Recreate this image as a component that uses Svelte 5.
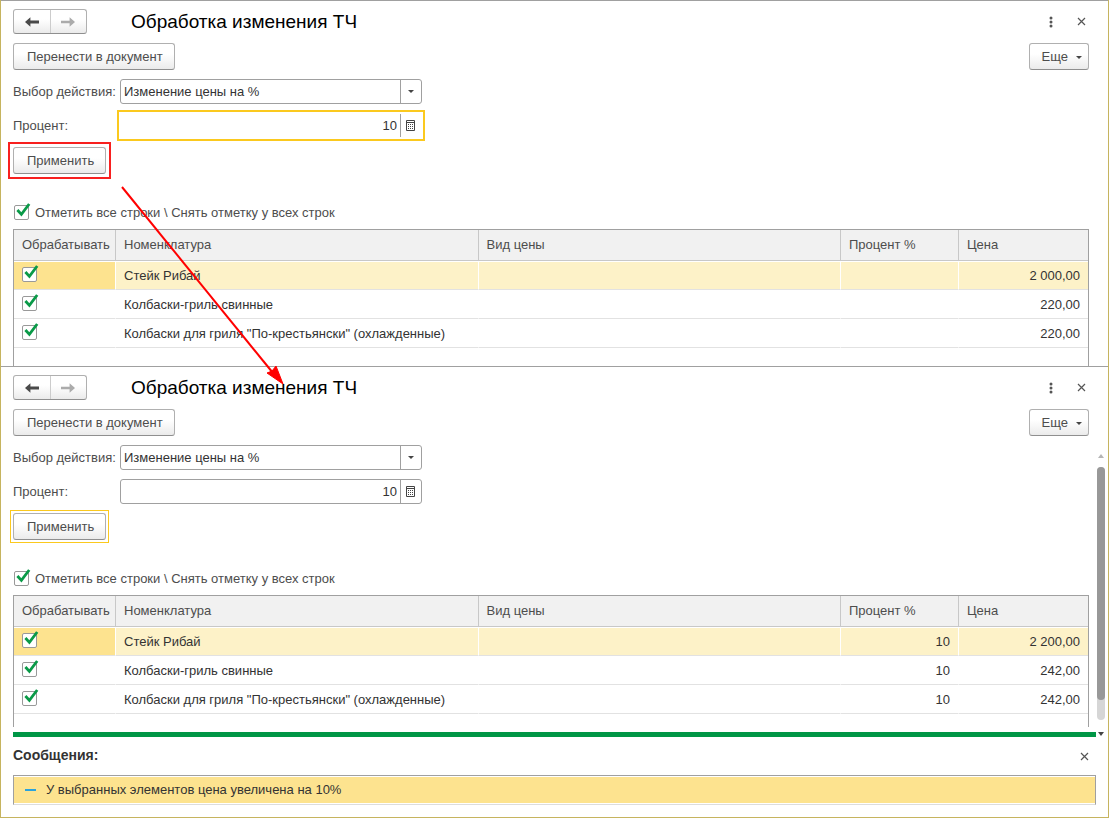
<script>
  const forms = [
    {
      id: 'before',
      focus: 'percent',
      mark: 'red',
      rows: [
        { name: 'Стейк Рибай', percent: '', price: '2 000,00' },
        { name: 'Колбаски-гриль свинные', percent: '', price: '220,00' },
        { name: 'Колбаски для гриля "По-крестьянски" (охлажденные)', percent: '', price: '220,00' }
      ]
    },
    {
      id: 'after',
      focus: 'apply',
      mark: 'yellow',
      messages: ['У выбранных элементов цена увеличена на 10%'],
      rows: [
        { name: 'Стейк Рибай', percent: '10', price: '2 200,00' },
        { name: 'Колбаски-гриль свинные', percent: '10', price: '242,00' },
        { name: 'Колбаски для гриля "По-крестьянски" (охлажденные)', percent: '10', price: '242,00' }
      ]
    }
  ];
</script>

{#snippet tick(label, id)}
  <span class="tick">
    <input type="checkbox" checked {id} aria-label={label} />
    <svg viewBox="0 0 17 17" width="17" height="17" aria-hidden="true">
      <path d="M3.4 7 7.4 11.4 15.2 1" />
    </svg>
  </span>
{/snippet}

{#snippet cross()}
  <svg width="9" height="9" viewBox="0 0 9 9" aria-hidden="true">
    <path d="M1 1 8 8M8 1 1 8" stroke="#555" stroke-width="1.2" fill="none" />
  </svg>
{/snippet}

<main class="page">
  {#each forms as form}
    <section class="form">
      <header class="head">
        <div class="nav">
          <button type="button" aria-label="Назад">
            <svg width="14" height="10" viewBox="0 0 14 10"><path d="M0 5 5.4 0.2V3.6H14V6.4H5.4V9.8Z" fill="#4a4a4a" /></svg>
          </button>
          <button type="button" aria-label="Вперед">
            <svg width="14" height="10" viewBox="0 0 14 10"><path d="M14 5 8.6 0.2V3.8H0V6.2H8.6V9.8Z" fill="#ababab" /></svg>
          </button>
        </div>
        <h1>Обработка изменения ТЧ</h1>
        <button type="button" class="plain" aria-label="Меню">
          <svg width="4" height="12" viewBox="0 0 4 12" fill="#555">
            <circle cx="2" cy="2" r="1.5" /><circle cx="2" cy="6" r="1.5" /><circle cx="2" cy="10" r="1.5" />
          </svg>
        </button>
        <button type="button" class="plain" aria-label="Закрыть">{@render cross()}</button>
      </header>

      <div class="toolbar">
        <button type="button" class="btn">Перенести в документ</button>
        <button type="button" class="btn more">
          Еще
          <svg width="6" height="3" viewBox="0 0 6 3"><path d="M0 0H6L3 3Z" fill="#444" /></svg>
        </button>
      </div>

      <div class="body">
        <div class="content">
          <div class="fields">
            <label for="action-{form.id}">Выбор действия:</label>
            <div class="field">
              <select id="action-{form.id}"><option>Изменение цены на %</option></select>
              <span class="side">
                <svg width="6" height="3" viewBox="0 0 6 3"><path d="M0 0H6L3 3Z" fill="#444" /></svg>
              </span>
            </div>
            <label for="percent-{form.id}">Процент:</label>
            <div class="field" class:focused={form.focus === 'percent'}>
              <input id="percent-{form.id}" type="text" value="10" />
              <button type="button" class="side" aria-label="Калькулятор">
                <svg width="9" height="11" viewBox="0 0 9 11">
                  <path d="M.5 .5H8.5V10.5H.5ZM.5 2.5H8.5" fill="none" stroke="#444" />
                  <path d="M2 4h1v1H2zM4 4h1v1H4zM6 4h1v1H6zM2 6h1v1H2zM4 6h1v1H4zM6 6h1v1H6zM2 8h1v1H2zM4 8h1v1H4zM6 8h1v1H6z" fill="#444" />
                </svg>
              </button>
            </div>
          </div>

          <div class="apply {form.mark}">
            <button type="button" class="btn">Применить</button>
          </div>

          <div class="all">
            {@render tick(undefined, `all-${form.id}`)}
            <label for="all-{form.id}">Отметить все строки \ Снять отметку у всех строк</label>
          </div>

          <div class="list" class:short={form.messages}>
            <table>
              <thead>
                <tr>
                  <th class="c-check">Обрабатывать</th>
                  <th>Номенклатура</th>
                  <th>Вид цены</th>
                  <th class="c-percent">Процент %</th>
                  <th class="c-price">Цена</th>
                </tr>
              </thead>
              <tbody>
                {#each form.rows as row, i}
                  <tr class:selected={i === 0}>
                    <td class="check">{@render tick(row.name)}</td>
                    <td>{row.name}</td>
                    <td></td>
                    <td class="num">{row.percent}</td>
                    <td class="num">{row.price}</td>
                  </tr>
                {/each}
              </tbody>
            </table>
          </div>
        </div>
        <div class="gutter">
          {#if form.messages}
            <svg width="6" height="4" viewBox="0 0 6 4"><path d="M0 4H6L3 0Z" fill="#b5b5b5" /></svg>
            <div class="track"><div class="thumb"></div></div>
          {/if}
        </div>
      </div>

      {#if form.messages}
        <div class="divider">
          <div class="bar"></div>
          <svg width="6" height="4" viewBox="0 0 6 4"><path d="M0 0H6L3 4Z" fill="#444" /></svg>
        </div>
        <div class="messages">
          <div class="messages-head">
            <h2>Сообщения:</h2>
            <button type="button" class="plain" aria-label="Закрыть сообщения">{@render cross()}</button>
          </div>
          <ul>
            {#each form.messages as message}
              <li><span class="dash"></span>{message}</li>
            {/each}
          </ul>
        </div>
      {/if}
    </section>
  {/each}

  <svg class="pointer" width="170" height="204" viewBox="0 0 170 204" aria-hidden="true">
    <path d="M5 5 156 191" stroke="#f00" stroke-width="2" />
    <path d="M166 202 150 191 155 189 159 184Z" fill="#f00" stroke="#f00" />
  </svg>
</main>

<style>
  :global(body) {
    margin: 0;
    background: #fff;
  }
  .page {
    position: relative;
    box-sizing: border-box;
    border: 1px solid #c6b45f;
    border-top: 0;
    font: 13px/18px 'Liberation Sans', Arial, sans-serif;
    color: #4d4d4d;
  }
  button,
  input,
  select {
    box-sizing: border-box;
    margin: 0;
    font: inherit;
    color: inherit;
  }
  svg {
    display: block;
    flex: none;
  }
  .form {
    border-top: 1px solid #a0a0a0;
    padding-top: 8px;
  }
  .head {
    display: flex;
    align-items: center;
    height: 25px;
    padding: 0 12px;
  }
  .nav {
    display: flex;
    box-sizing: border-box;
    width: 74px;
    height: 25px;
    border: 1px solid #b0b0b0;
    border-bottom-color: #8f8f8f;
    border-radius: 3px;
    background: linear-gradient(#fff 40%, #ebebeb);
  }
  .nav button {
    flex: 1;
    display: flex;
    align-items: center;
    justify-content: center;
    padding: 0;
    border: 0;
    background: none;
  }
  .nav button + button {
    border-left: 1px solid #ccc;
  }
  h1 {
    flex: 1;
    margin: 0 0 0 44px;
    font-size: 19px;
    line-height: 24px;
    font-weight: 400;
    color: #000;
  }
  .plain {
    display: flex;
    align-items: center;
    justify-content: center;
    width: 30px;
    height: 24px;
    padding: 0;
    border: 0;
    background: none;
  }
  .toolbar {
    display: flex;
    justify-content: space-between;
    padding: 9px 19px 9px 12px;
  }
  .btn {
    display: flex;
    align-items: center;
    height: 27px;
    padding: 1px 11px 0 13px;
    border: 1px solid #b0b0b0;
    border-bottom-color: #8f8f8f;
    border-radius: 3px;
    background: linear-gradient(#fff 40%, #ebebeb);
  }
  .more {
    gap: 8px;
    padding: 1px 6px 0 12px;
  }
  .body {
    display: flex;
  }
  .content {
    flex: 1;
    min-width: 0;
    padding-left: 12px;
  }
  .fields {
    display: grid;
    grid-template-columns: 107px 302px;
    row-gap: 9px;
    align-items: center;
  }
  .field {
    display: flex;
    box-sizing: border-box;
    height: 25px;
    border: 1px solid #a0a0a0;
    border-radius: 3px;
    color: #333;
  }
  .field select,
  .field input {
    flex: 1;
    min-width: 0;
    padding: 0 3px;
    border: 0;
    outline: 0;
    background: none;
    appearance: none;
  }
  .side {
    box-sizing: border-box;
    width: 21px;
    display: flex;
    align-items: center;
    justify-content: center;
    padding: 0 1px 0 0;
    border: 0;
    border-left: 1px solid #a0a0a0;
    background: none;
    pointer-events: none;
  }
  .field input {
    text-align: right;
  }
  .focused {
    border-color: transparent;
    border-radius: 0;
    outline: 2px solid #fbc91e;
    outline-offset: 1px;
  }
  .apply {
    width: fit-content;
    margin-top: 9px;
  }
  .red {
    outline: 2px solid #f8201f;
    outline-offset: 3px;
  }
  .yellow {
    outline: 1px solid #fbc91e;
    outline-offset: 2px;
  }
  .all {
    display: flex;
    align-items: flex-end;
    gap: 4px;
    margin: 28px 0 8px;
    padding-left: 1px;
    line-height: 17px;
  }
  .all label {
    padding-top: 2px;
  }
  .all .tick {
    margin-bottom: 1px;
  }
  .tick {
    display: grid;
    width: 17px;
    height: 17px;
  }
  .tick > * {
    grid-area: 1 / 1;
  }
  .tick input {
    align-self: end;
    width: 15px;
    height: 15px;
    border: 1px solid #999;
    border-radius: 2px;
    background: #fff;
    appearance: none;
  }
  .tick svg {
    position: relative;
    pointer-events: none;
  }
  .tick path {
    fill: none;
    stroke: #0a9a48;
    stroke-width: 2.8;
  }
  .list {
    border: 1px solid #a0a0a0;
    border-bottom: 0;
    padding-bottom: 18px;
  }
  .short {
    padding-bottom: 13px;
  }
  table {
    width: 100%;
    table-layout: fixed;
    border-spacing: 0;
  }
  th,
  td {
    box-sizing: border-box;
    padding: 0 8px;
    text-align: left;
    font-weight: 400;
    white-space: nowrap;
  }
  th {
    height: 31px;
    background: #f1f1f1;
    border-right: 1px solid #c8c8c8;
    border-bottom: 1px solid #c8c8c8;
  }
  td {
    height: 29px;
    border-top: 1px solid #fff;
    border-right: 1px solid #fff;
    border-bottom: 1px solid #e2e2e2;
    color: #333;
  }
  th:last-child,
  td:last-child {
    border-right: 0;
  }
  .check {
    padding-bottom: 4px;
  }
  .selected td {
    background: #fdf2c8;
  }
  .selected .check {
    background: #fde38f;
  }
  .num {
    text-align: right;
  }
  .c-check {
    width: 102px;
  }
  .c-percent {
    width: 118px;
  }
  .c-price {
    width: 129px;
  }
  .gutter {
    display: flex;
    flex-direction: column;
    align-items: flex-end;
    gap: 9px;
    box-sizing: border-box;
    width: 19px;
    padding: 9px 3px 7px 0;
  }
  .gutter > svg {
    margin-right: 1px;
  }
  .track {
    flex: 1;
    width: 8px;
    border-radius: 4px;
    background: #d6d6d6;
  }
  .thumb {
    height: 92%;
    border-radius: 4px;
    background: #989898;
  }
  .divider {
    display: flex;
    align-items: flex-start;
    gap: 2px;
    padding: 5px 4px 0 12px;
  }
  .bar {
    flex: 1;
    height: 5px;
    background: #009646;
  }
  .messages {
    padding: 0 12px 12px;
  }
  .messages-head {
    display: flex;
    align-items: center;
    justify-content: space-between;
    height: 38px;
  }
  .messages-head .plain {
    width: 24px;
  }
  h2 {
    margin: 0;
    padding-bottom: 2px;
    font-size: 14px;
    line-height: 18px;
    color: #333;
  }
  ul {
    margin: 0;
    padding: 0;
    list-style: none;
    border: 1px solid #a0a0a0;
    border-bottom-color: #ddd;
  }
  li {
    display: flex;
    align-items: center;
    gap: 10px;
    height: 26px;
    margin: 1px 0;
    padding-left: 11px;
    background: #fde38f;
    color: #333;
  }
  .dash {
    width: 11px;
    height: 2px;
    background: #2ba3dc;
  }
  .pointer {
    position: absolute;
    left: 116px;
    top: 182px;
    pointer-events: none;
  }
</style>
